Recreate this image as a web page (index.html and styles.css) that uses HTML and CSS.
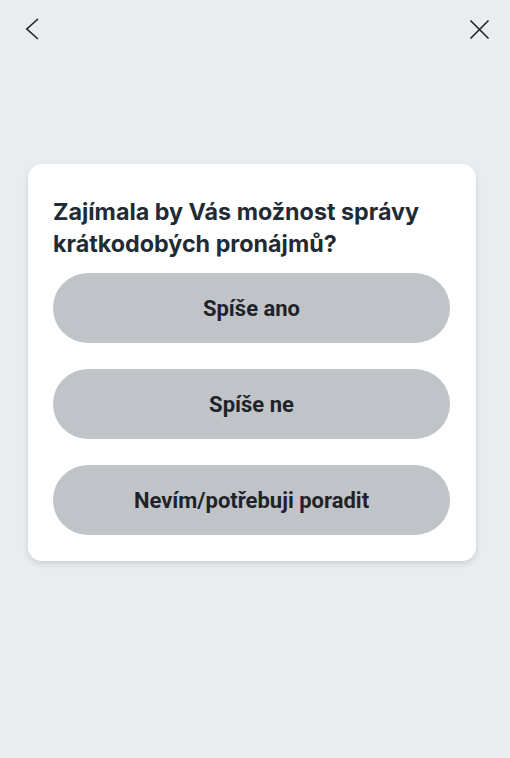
FILE: index.html
```html
<!DOCTYPE html>
<html lang="cs">
<head>
<meta charset="utf-8">
<link rel="stylesheet" href="styles.css">
</head>
<body>
<div class="page">
  <header class="topbar">
    <button class="icon-btn" aria-label="Zpět">
      <svg width="24" height="24" viewBox="0 0 24 24"><path d="M18 2 L6.8 12 L18 22" fill="none" stroke="#1f2328" stroke-width="1.6"/></svg>
    </button>
    <button class="icon-btn" aria-label="Zavřít">
      <svg width="24" height="24" viewBox="0 0 24 24"><path d="M2.5 3.5 L20.5 21.5 M20.5 3.5 L2.5 21.5" fill="none" stroke="#1f2328" stroke-width="1.6"/></svg>
    </button>
  </header>
  <main class="content">
    <section class="card">
      <h1 class="question">Zajímala by Vás možnost správy krátkodobých pronájmů?</h1>
      <div class="options">
        <button class="option">Spíše ano</button>
        <button class="option">Spíše ne</button>
        <button class="option">Nevím/potřebuji poradit</button>
      </div>
    </section>
  </main>
</div>
</body>
</html>
```
FILE: styles.css
```css
html, body {
  margin: 0;
  padding: 0;
}
body {
  background: #e9edf0;
  width: 510px;
  height: 758px;
  font-family: "Inter", "Roboto", sans-serif;
}
.page {
  display: flex;
  flex-direction: column;
}
.topbar {
  display: flex;
  justify-content: space-between;
  padding: 17px 18px 0 20px;
}
.icon-btn {
  background: none;
  border: 0;
  padding: 0;
  width: 24px;
  height: 24px;
  display: flex;
}
.content {
  padding: 123px 34px 0 28px;
}
.card {
  background: #ffffff;
  border-radius: 14px;
  box-shadow: 0 3px 6px rgba(0, 0, 0, 0.12);
  padding: 32px 26px 26px 25px;
}
.question {
  margin: 0 0 13px 0;
  font-family: "Inter", sans-serif;
  font-weight: 700;
  font-size: 23.3px;
  line-height: 32px;
  color: #222b33;
  letter-spacing: 0;
}
.options {
  display: flex;
  flex-direction: column;
  gap: 26px;
}
.option {
  height: 70px;
  border: 0;
  border-radius: 35px;
  background: #c0c4c8;
  font-family: "Roboto", sans-serif;
  font-weight: 700;
  font-size: 22px;
  color: #1f2328;
}
```
